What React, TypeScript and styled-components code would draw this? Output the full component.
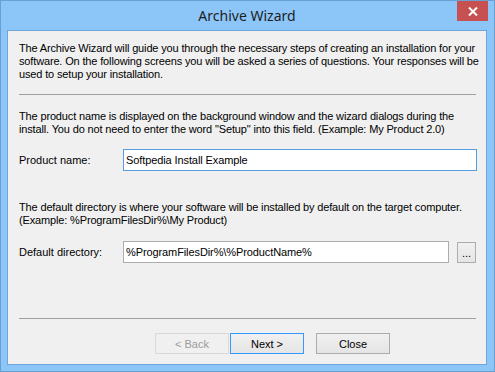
import React, { useState } from 'react';
import styled, { createGlobalStyle } from 'styled-components';

const GlobalStyle = createGlobalStyle`
  html, body {
    margin: 0;
    padding: 0;
    background: #ffffff;
  }
`;

const Lines: React.FC<{ lines: string[] }> = ({ lines }) => (
  <>
    {lines.map((line) => (
      <Line key={line}>{line}</Line>
    ))}
  </>
);

const App: React.FC = () => {
  const [productName, setProductName] = useState('Softpedia Install Example');
  const [directory, setDirectory] = useState('%ProgramFilesDir%\\%ProductName%');

  return (
    <>
      <GlobalStyle />
      <Frame>
        <TitleBar>
          <Title>Archive Wizard</Title>
          <CloseButton aria-label="Close">
            <svg width="10" height="9" viewBox="0 0 10 9">
              <path d="M1 0.5 L9 8.5 M9 0.5 L1 8.5" stroke="#ffffff" strokeWidth="2" />
            </svg>
          </CloseButton>
        </TitleBar>
        <Client>
          <Paragraph>
            <Lines
              lines={[
                'The Archive Wizard will guide you through the necessary steps of creating an installation for your',
                'software. On the following screens you will be asked a series of questions. Your responses will be',
                'used to setup your installation.',
              ]}
            />
          </Paragraph>
          <Separator $top={13} />
          <Paragraph $top={15}>
            <Lines
              lines={[
                'The product name is displayed on the background window and the wizard dialogs during the',
                'install. You do not need to enter the word "Setup" into this field. (Example: My Product 2.0)',
              ]}
            />
          </Paragraph>
          <FieldRow $top={13}>
            <Label>Product name:</Label>
            <TextInput
              $focused
              value={productName}
              onChange={(e) => setProductName(e.target.value)}
            />
          </FieldRow>
          <Paragraph $top={30}>
            <Lines
              lines={[
                'The default directory is where your software will be installed by default on the target computer.',
                '(Example: %ProgramFilesDir%\\My Product)',
              ]}
            />
          </Paragraph>
          <FieldRow $top={14}>
            <Label>Default directory:</Label>
            <TextInput value={directory} onChange={(e) => setDirectory(e.target.value)} />
            <BrowseButton type="button">...</BrowseButton>
          </FieldRow>
          <Footer>
            <Separator $top={0} />
            <ButtonBar>
              <WizardButton type="button" disabled>
                &lt; Back
              </WizardButton>
              <WizardButton type="button" $primary>
                Next &gt;
              </WizardButton>
              <WizardButton type="button" $gap={12}>
                Close
              </WizardButton>
            </ButtonBar>
          </Footer>
        </Client>
      </Frame>
    </>
  );
};

const Frame = styled.div`
  width: 495px;
  height: 372px;
  box-sizing: border-box;
  background: #8cc6f8;
  border: 1px solid #6a9fd2;
  display: flex;
  flex-direction: column;
  padding: 0 7px 6px 6px;
`;

const TitleBar = styled.div`
  height: 29px;
  position: relative;
  display: flex;
  align-items: center;
  justify-content: center;
`;

const Title = styled.div`
  font-family: 'Noto Sans', 'Open Sans', sans-serif;
  font-size: 14px;
  color: #1e1e1e;
  margin-top: -1px;
`;

const CloseButton = styled.button`
  position: absolute;
  top: 0;
  right: -1px;
  width: 31px;
  height: 20px;
  border: none;
  padding: 0;
  background: #c75050;
  display: flex;
  align-items: center;
  justify-content: center;
  cursor: pointer;
`;

const Client = styled.div`
  flex: 1;
  display: flex;
  flex-direction: column;
  background: #f0f0f0;
  border: 1px solid #6ea6dc;
  padding: 11px 10px 10px 11px;
  font-family: 'Liberation Sans', Arial, sans-serif;
  font-size: 11px;
  line-height: 13px;
  color: #000000;
`;

const Paragraph = styled.div<{ $top?: number }>`
  margin: ${({ $top }) => $top ?? 0}px 0 0;
  letter-spacing: -0.15px;
`;

const Line = styled.div`
  white-space: nowrap;
`;

const Separator = styled.div<{ $top: number }>`
  height: 1px;
  background: #a0a0a0;
  margin-top: ${({ $top }) => $top}px;
`;

const FieldRow = styled.div<{ $top: number }>`
  display: flex;
  align-items: center;
  margin-top: ${({ $top }) => $top}px;
`;

const Label = styled.span`
  width: 104px;
  flex-shrink: 0;
  padding-top: 1px;
`;

const TextInput = styled.input<{ $focused?: boolean }>`
  flex: 1;
  height: 22px;
  box-sizing: border-box;
  margin-right: ${({ $focused }) => ($focused ? '-1px' : '0')};
  border: 1px solid ${({ $focused }) => ($focused ? '#569de5' : '#abadb3')};
  background: #ffffff;
  padding: 0 2px;
  font-family: 'Liberation Sans', Arial, sans-serif;
  font-size: 11px;
  letter-spacing: -0.1px;
  color: #000000;
  outline: none;
`;

const BrowseButton = styled.button`
  width: 19px;
  height: 21px;
  margin-left: 8px;
  padding: 0;
  box-sizing: border-box;
  border: 1px solid #acacac;
  background: linear-gradient(#f0f0f0, #e5e5e5);
  font-family: 'Liberation Sans', Arial, sans-serif;
  font-size: 11px;
  color: #000000;
  line-height: 20px;
`;

const Footer = styled.div`
  margin-top: auto;
  display: flex;
  flex-direction: column;
`;

const ButtonBar = styled.div`
  display: flex;
  justify-content: flex-end;
  margin-top: 14px;
  padding-right: 86px;
`;

const WizardButton = styled.button<{ $primary?: boolean; $gap?: number }>`
  width: 74px;
  height: 21px;
  box-sizing: border-box;
  margin-left: ${({ $gap }) => $gap ?? 1}px;
  padding: 0;
  border: 1px solid ${({ $primary }) => ($primary ? '#3399ff' : '#acacac')};
  background: linear-gradient(#f0f0f0, #e5e5e5);
  font-family: 'Liberation Sans', Arial, sans-serif;
  font-size: 11px;
  color: #000000;
  cursor: pointer;

  &:disabled {
    background: #f0f0f0;
    border-color: #d9d9d9;
    color: #9b9b9b;
    cursor: default;
  }
`;

export default App;
